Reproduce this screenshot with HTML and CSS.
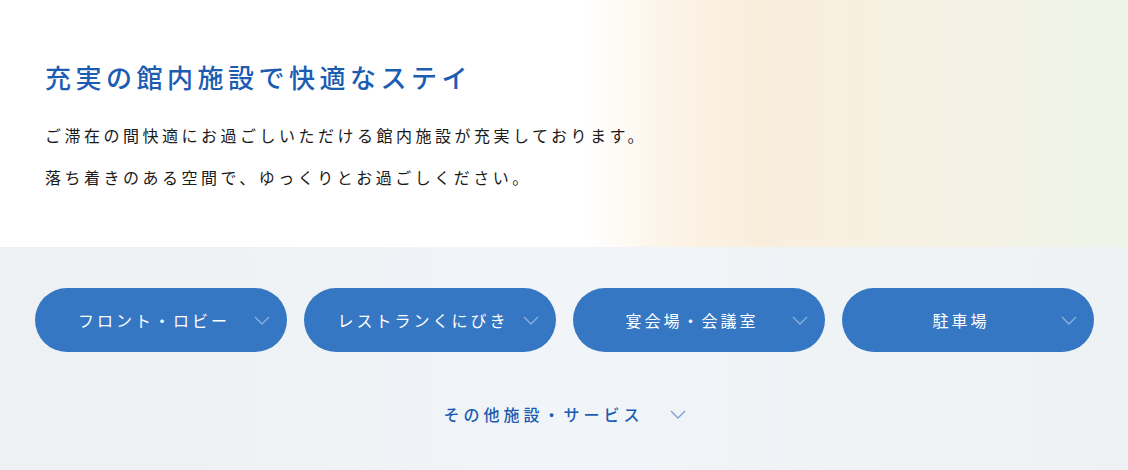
FILE: index.html
```html
<!DOCTYPE html>
<html lang="ja">
<head>
  <meta charset="UTF-8">
  <meta name="viewport" content="width=device-width, initial-scale=1">
  <link rel="stylesheet" href="styles.css">
  <title>館内施設</title>
</head>
<body>
  <section class="intro">
    <h2 class="intro-title">充実の館内施設で快適なステイ</h2>
    <p class="intro-text">ご滞在の間快適にお過ごしいただける館内施設が充実しております。<br>落ち着きのある空間で、ゆっくりとお過ごしください。</p>
  </section>

  <section class="facilities">
    <div class="facility-list">
      <button class="facility-btn">フロント・ロビー
        <svg class="chev" viewBox="0 0 16 9"><polyline points="1,1 8,8 15,1"/></svg>
      </button>
      <button class="facility-btn">レストランくにびき
        <svg class="chev" viewBox="0 0 16 9"><polyline points="1,1 8,8 15,1"/></svg>
      </button>
      <button class="facility-btn">宴会場・会議室
        <svg class="chev" viewBox="0 0 16 9"><polyline points="1,1 8,8 15,1"/></svg>
      </button>
      <button class="facility-btn">駐車場
        <svg class="chev" viewBox="0 0 16 9"><polyline points="1,1 8,8 15,1"/></svg>
      </button>
    </div>
    <button class="more-btn">その他施設・サービス
      <svg class="chev" viewBox="0 0 16 9"><polyline points="1,1 8,8 15,1"/></svg>
    </button>
  </section>
</body>
</html>
```

FILE: styles.css
```css
* {
  margin: 0;
  padding: 0;
  box-sizing: border-box;
}
body {
  width: 1128px;
  height: 470px;
  overflow: hidden;
  font-family: "Liberation Serif", "Noto Sans CJK JP", serif;
  background: #eef2f5;
}
.intro {
  height: 247px;
  padding: 57px 45px 0;
  background: linear-gradient(90deg, #ffffff 0%, #ffffff 52%, #fcf4e8 59%, #f9eedc 67%, #f5f1e3 82%, #eef3e9 100%);
}
.intro-title {
  font-family: "Noto Sans CJK JP", sans-serif;
  font-size: 26px;
  font-weight: 500;
  color: #1c5db2;
  letter-spacing: 4.5px;
  line-height: 40px;
}
.intro-text {
  margin-top: 17px;
  font-family: "Noto Sans CJK JP", sans-serif;
  font-size: 16px;
  color: #1a1a1a;
  letter-spacing: 3.5px;
  line-height: 42px;
}
/* lower band with facility buttons */
.facilities {
  height: 223px;
  padding: 41px 34px 0 35px;
  background: linear-gradient(90deg, #edf1f3 0%, #f1f4f8 50%, #eef2f4 100%);
}
.facility-list {
  display: grid;
  grid-template-columns: repeat(4, 252px);
  gap: 17px;
}
.facility-btn {
  position: relative;
  height: 64px;
  border: none;
  border-radius: 32px;
  background: #3577c2;
  color: #ffffff;
  font-family: "Noto Sans CJK JP", sans-serif;
  font-size: 16px;
  letter-spacing: 3px;
  padding: 0 34px 0 20px;
}
.chev {
  width: 16px;
  height: 9px;
  fill: none;
  stroke-width: 1.4;
}
.facility-btn .chev {
  position: absolute;
  right: 17px;
  top: 28px;
  stroke: #8cb0de;
}
.more-btn {
  display: flex;
  align-items: center;
  gap: 26px;
  margin: 50px auto 0;
  padding-left: 0;
  border: none;
  background: none;
  color: #1c5db2;
  font-family: "Noto Sans CJK JP", sans-serif;
  font-size: 16px;
  font-weight: 500;
  letter-spacing: 4px;
}
.more-btn .chev {
  stroke: #7ba3d8;
}
```
